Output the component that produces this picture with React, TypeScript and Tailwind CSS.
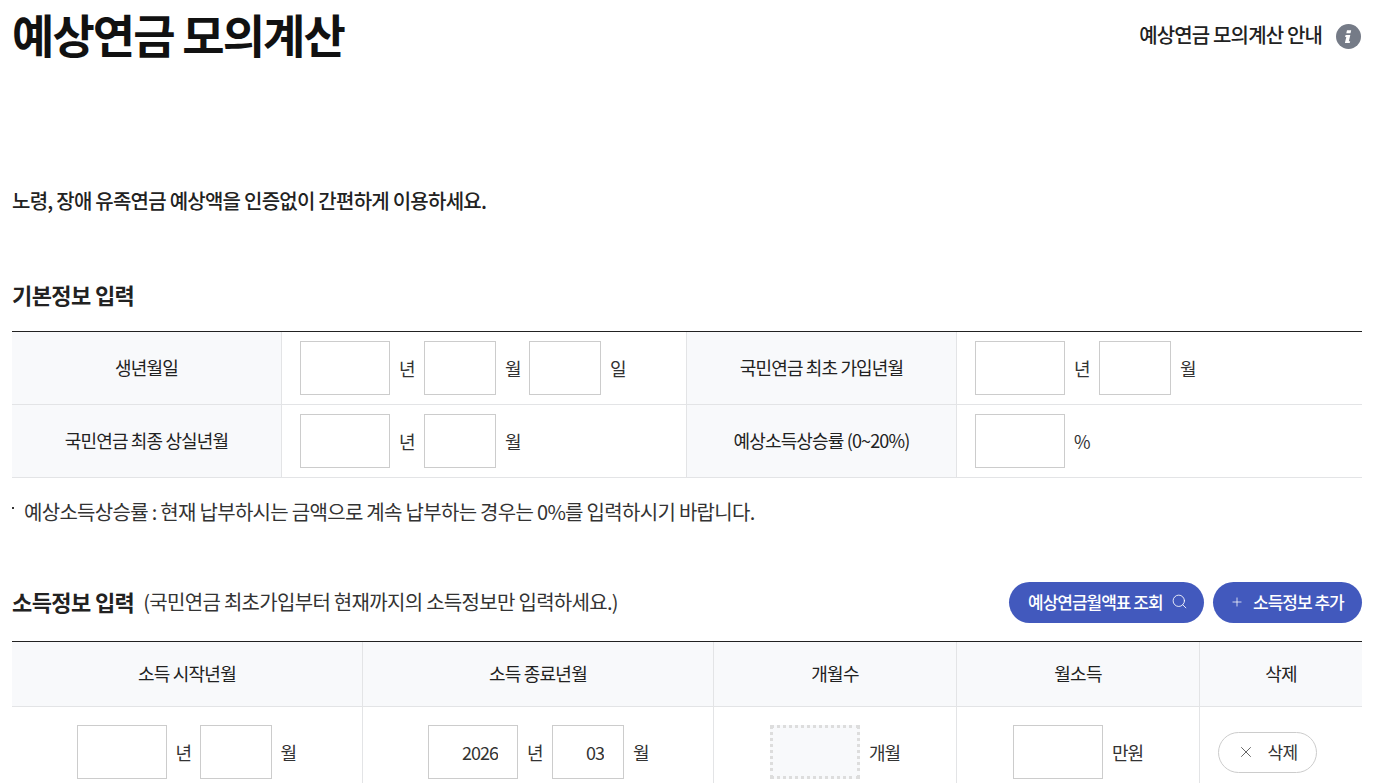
import { Plus, Search, X } from 'lucide-react';
import type { ReactNode } from 'react';

const FONT = 'font-["Noto_Sans_CJK_KR","Noto_Sans",sans-serif]';

function Field({ width, unit, value, tight }: { width: string; unit: string; value?: string; tight?: boolean }) {
  return (
    <div className={`flex items-center ${tight ? '-ml-px' : ''}`}>
      <input
        readOnly
        defaultValue={value}
        className={`${width} h-[54px] border border-[#cccccc] bg-white text-right pr-[19px] text-[18px] tracking-[-1px] text-[#333] outline-none`}
      />
      <span className="ml-[9px] mr-[10px] w-[15px] whitespace-nowrap text-[18px] tracking-[-1px] text-[#333]">{unit}</span>
    </div>
  );
}

function InfoLabel({ children }: { children: string }) {
  return (
    <div className="flex items-center justify-center pb-[2px] bg-[#f8f9fb] border-r border-[#e3e4e6] text-[18px] tracking-[-0.85px] text-[#222]">
      {children}
    </div>
  );
}

function InfoValue({ children, border }: { children: ReactNode; border?: boolean }) {
  return (
    <div className={`flex items-center pl-[18px] ${border ? 'border-r border-[#e3e4e6]' : ''}`}>{children}</div>
  );
}

function HeadCell({ children, last }: { children: string; last?: boolean }) {
  return (
    <div className={`flex items-center justify-center pb-[2px] text-[18px] tracking-[-0.8px] text-[#222] ${last ? '' : 'border-r border-[#e3e4e6]'}`}>
      {children}
    </div>
  );
}

export default function App() {
  return (
    <div className={`${FONT} h-[783px] overflow-hidden bg-white pl-3 pr-5`}>
      {/* Title */}
      <div className="flex items-start justify-between h-[72px]">
        <h1 className="text-[46px] leading-[66px] font-bold tracking-[-1.9px] text-[#111]">예상연금 모의계산</h1>
        <div className="flex items-center h-[72px] pr-px">
          <span className="-mt-[2px] text-[20px] font-medium tracking-[-0.85px] text-[#222]">예상연금 모의계산 안내</span>
          <svg className="ml-[14px]" width="25" height="25" viewBox="0 0 25 25">
            <circle cx="12.5" cy="12.5" r="12.5" fill="#757b87" />
            <path d="M11 6.2h4.2l-.7 3h-4.2zM9.6 11h4.7l-1.5 6.2h1.4l-.5 1.9H8.9l1.4-6.2H9.1z" fill="#fff" />
          </svg>
        </div>
      </div>

      <p className="mt-[115px] text-[20px] leading-[28px] font-medium tracking-[-0.75px] text-[#222]">
        노령, 장애 유족연금 예상액을 인증없이 간편하게 이용하세요.
      </p>

      {/* 기본정보 */}
      <h2 className="mt-[63px] text-[22px] leading-[32px] font-bold tracking-[-0.6px] text-[#222]">기본정보 입력</h2>
      <div className="mt-[21px] border-t border-[#222] grid grid-cols-[270px_405px_270px_405px]">
        <div className="col-span-4 grid grid-cols-subgrid h-[73px] border-b border-[#e3e4e6]">
          <InfoLabel>생년월일</InfoLabel>
          <InfoValue border>
            <Field width="w-[90px]" unit="년" />
            <Field width="w-[72px]" unit="월" />
            <Field width="w-[72px]" unit="일" tight />
          </InfoValue>
          <InfoLabel>국민연금 최초 가입년월</InfoLabel>
          <InfoValue>
            <Field width="w-[90px]" unit="년" />
            <Field width="w-[72px]" unit="월" />
          </InfoValue>
        </div>
        <div className="col-span-4 grid grid-cols-subgrid h-[73px] border-b border-[#e3e4e6]">
          <InfoLabel>국민연금 최종 상실년월</InfoLabel>
          <InfoValue border>
            <Field width="w-[90px]" unit="년" />
            <Field width="w-[72px]" unit="월" />
          </InfoValue>
          <InfoLabel>예상소득상승률 (0~20%)</InfoLabel>
          <InfoValue>
            <Field width="w-[90px]" unit="%" />
          </InfoValue>
        </div>
      </div>

      <div className="mt-[20px] flex text-[20px] leading-[28px] tracking-[-0.7px] text-[#333]">
        <span className="mt-[9px] mr-[10px] h-[2px] w-[2px] bg-[#333]" />
        예상소득상승률 : 현재 납부하시는 금액으로 계속 납부하는 경우는 0%를 입력하시기 바랍니다.
      </div>

      {/* 소득정보 */}
      <div className="mt-[56px] flex items-center justify-between h-[41px]">
        <div className="flex items-center pb-[2px]">
          <h2 className="text-[22px] font-bold tracking-[-0.6px] text-[#222]">소득정보 입력</h2>
          <span className="ml-[9px] text-[20px] tracking-[-0.7px] text-[#333]">(국민연금 최초가입부터 현재까지의 소득정보만 입력하세요.)</span>
        </div>
        <div className="flex gap-[9px]">
          <button className="flex items-center h-[41px] w-[195px] pl-[19px] pb-[2px] rounded-full bg-[#4259bd] text-white text-[17px] font-medium tracking-[-1px]">
            예상연금월액표 조회
            <Search size={17} strokeWidth={1.2} className="ml-[8px]" />
          </button>
          <button className="flex items-center h-[41px] w-[149px] pl-[17px] pb-[2px] rounded-full bg-[#4259bd] text-white text-[17px] font-medium tracking-[-1px]">
            <Plus size={14} strokeWidth={1.3} className="mr-[9px]" />
            소득정보 추가
          </button>
        </div>
      </div>

      <div className="mt-[18px] border-t border-[#222] grid grid-cols-[351px_351px_243px_243px_162px]">
        <div className="col-span-5 grid grid-cols-subgrid h-[65px] bg-[#f8f9fb] border-b border-[#e3e4e6]">
          <HeadCell>소득 시작년월</HeadCell>
          <HeadCell>소득 종료년월</HeadCell>
          <HeadCell>개월수</HeadCell>
          <HeadCell>월소득</HeadCell>
          <HeadCell last>삭제</HeadCell>
        </div>
        <div className="col-span-5 grid grid-cols-subgrid h-[90px]">
          <div className="flex items-center justify-center border-r border-[#e3e4e6] pl-[8px]">
            <Field width="w-[90px]" unit="년" />
            <Field width="w-[72px]" unit="월" tight />
          </div>
          <div className="flex items-center justify-center border-r border-[#e3e4e6] pl-[10px]">
            <Field width="w-[90px]" unit="년" value="2026" />
            <Field width="w-[72px]" unit="월" value="03" />
          </div>
          <div className="flex items-center justify-center border-r border-[#e3e4e6]">
            <div className="h-[54px] w-[90px] border-[3px] border-dotted border-[#dddddd] bg-[#f8f9fb]" />
            <span className="ml-[9px] text-[18px] tracking-[-1px] text-[#333]">개월</span>
          </div>
          <div className="flex items-center justify-center border-r border-[#e3e4e6]">
            <div className="h-[54px] w-[90px] border border-[#cccccc] bg-white" />
            <span className="ml-[9px] text-[18px] tracking-[-1px] text-[#333]">만원</span>
          </div>
          <div className="flex items-center pl-[18px]">
            <button className="flex items-center justify-center h-[41px] w-[99px] rounded-full border border-[#cccccc] bg-white text-[17px] tracking-[-0.6px] text-[#333]">
              <X size={18} strokeWidth={1} className="mr-[12px]" />
              삭제
            </button>
          </div>
        </div>
      </div>
    </div>
  );
}
